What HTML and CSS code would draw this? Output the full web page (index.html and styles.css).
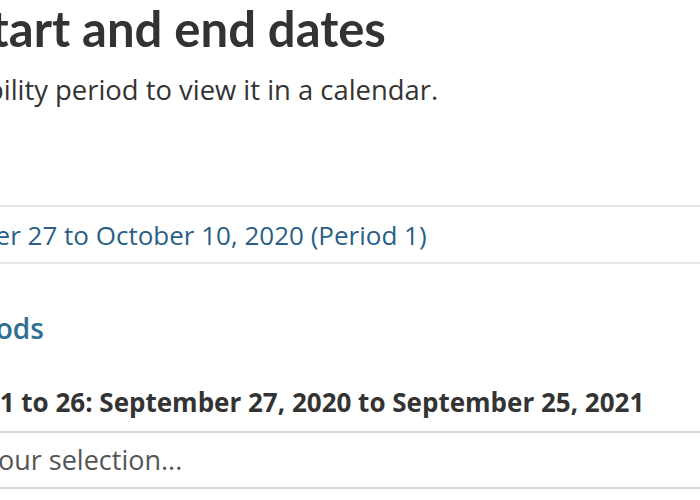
FILE: index.html
```html
<!DOCTYPE html>
<html lang="en">

<head>
    <meta charset="UTF-8" />
    <meta name="viewport" content="width=device-width, initial-scale=1.0" />
    <title>Availability periods</title>
    <link rel="stylesheet" href="styles.css">
</head>

<body>
    <main class="page">
        <h1 class="title">Select start and end dates</h1>
        <p class="intro">Select an availability period to view it in a calendar.</p>

        <div class="current">
            <a href="#" class="current-link">September 27 to October 10, 2020 (Period 1)</a>
        </div>

        <h2 class="section-title">Available periods</h2>

        <div class="range">Periods 1 to 26: September 27, 2020 to September 25, 2021</div>
        <div class="picker">Refine your selection...</div>
    </main>
</body>

</html>
```

FILE: styles.css
```css
html,
body {
    margin: 0;
    background: #fff;
    overflow: hidden;
}

.page {
    margin-left: -208px;
    width: 1000px;
    font-family: "Open Sans", "Liberation Sans", sans-serif;
    color: #333;
}

.title {
    font-family: Lato, "Open Sans", sans-serif;
    font-weight: 700;
    font-size: 49px;
    line-height: 56px;
    margin: 0;
    padding-left: 32px;
    color: #333;
}

.intro {
    font-size: 27.4px;
    line-height: 36px;
    margin: 16px 0 0;
    color: #333;
}

.current {
    margin-top: 97px;
    border-top: 2px solid #e6e6e6;
    border-bottom: 2px solid #e6e6e6;
    padding: 11px 0 10px 95px;
}

.current-link {
    font-size: 26px;
    line-height: 34px;
    color: #2b5f86;
    text-decoration: none;
}

.section-title {
    font-size: 28px;
    font-weight: 600;
    line-height: 36px;
    margin: 46px 0 0;
    padding-left: 20px;
    color: #2f7092;
}

.range {
    font-size: 26px;
    font-weight: 700;
    line-height: 34px;
    margin-top: 39px;
    padding: 0 0 12px 104px;
    border-bottom: 2px solid #d6d6d6;
}

.picker {
    font-size: 27px;
    line-height: 34px;
    color: #555;
    padding: 10px 0 10px 106px;
    border-bottom: 2px solid #d6d6d6;
}
```
